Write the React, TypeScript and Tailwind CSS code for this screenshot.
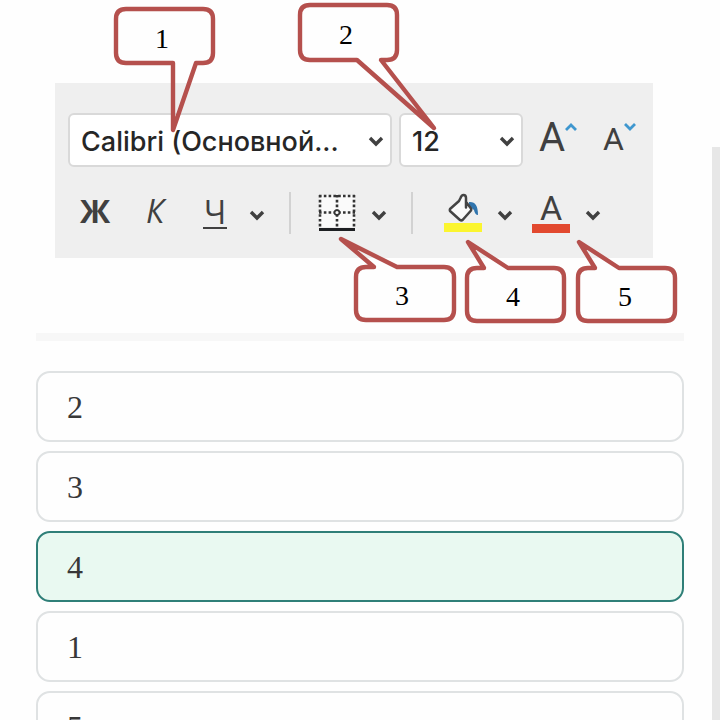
import React, { useState } from "react";

const OPTIONS = ["2", "3", "4", "1", "5"];

const CALLOUTS = [
  {
    label: "1",
    x: 162,
    y: 48,
    d: "M126 9H203Q213 9 213 19V53Q213 63 203 63H196L173 130V63H126Q116 63 116 53V19Q116 9 126 9Z",
  },
  {
    label: "2",
    x: 346,
    y: 44,
    d: "M310 5H387Q397 5 397 15V50Q397 60 387 60H381L434 128L357 60H310Q300 60 300 50V15Q300 5 310 5Z",
  },
  {
    label: "3",
    x: 402,
    y: 305,
    d: "M366 267H374L341 239L397 267H444Q454 267 454 277V310Q454 320 444 320H366Q356 320 356 310V277Q356 267 366 267Z",
  },
  {
    label: "4",
    x: 513,
    y: 306,
    d: "M477 268H484L468 242L508 268H554Q564 268 564 278V311Q564 321 554 321H477Q467 321 467 311V278Q467 268 477 268Z",
  },
  {
    label: "5",
    x: 625,
    y: 306,
    d: "M588 268H595L579 242L619 268H665Q675 268 675 278V311Q675 321 665 321H588Q578 321 578 311V278Q578 268 588 268Z",
  },
];

function Chevron({ className = "" }: { className?: string }) {
  return (
    <svg width="16" height="12" viewBox="0 0 16 12" fill="none" className={className}>
      <path d="M2 3L8 9L14 3" stroke="currentColor" strokeWidth="3.4" />
    </svg>
  );
}

function MenuButton({ label }: { label: string }) {
  return (
    <button aria-label={label} className="flex w-6 justify-center pt-1">
      <Chevron />
    </button>
  );
}

function Dropdown({ label, value, className }: { label: string; value: string; className: string }) {
  return (
    <div className={`relative ${className}`}>
      <select
        aria-label={label}
        className="h-[54px] w-full appearance-none rounded-md border-2 border-[#d9d9d9] bg-white pt-1 pl-[11px] text-[27px] font-medium text-[#262626]"
      >
        <option>{value}</option>
      </select>
      <Chevron className="pointer-events-none absolute top-[22px] right-2" />
    </div>
  );
}

function BordersIcon() {
  return (
    <svg width="38" height="38" viewBox="0 0 38 38" fill="none">
      <rect x="1" y="1" width="36" height="32" fill="#fafafa" />
      <g stroke="#333" strokeWidth="2.6" strokeDasharray="2.6 2.2">
        <path d="M1 2H37M1 18.500H37M2 1V33M19 1V33M36 1V33" />
      </g>
      <circle cx="19" cy="18.500" r="2.400" fill="#fafafa" stroke="#333" strokeWidth="1.6" />
      <path d="M1 35.500H37" stroke="#1d1f22" strokeWidth="3" />
    </svg>
  );
}

function FillIcon() {
  return (
    <svg width="38" height="40" viewBox="0 0 38 40" fill="none">
      <path d="M25 9Q34 8 34 22Q31 22 30 17L25 13Z" fill="#2f74ad" />
      <path
        d="M22 14.500V5Q22 2 19.500 2Q17.500 2 16.500 5L15 8L6 16Q5.500 17 6 18L16 27Q17.500 28 19 26.500L27 17.500Q27.500 16.500 27 15.500L22.500 9.500"
        fill="#fafafa"
        stroke="#444"
        strokeWidth="2.500"
        strokeLinecap="round"
        strokeLinejoin="round"
      />
      <rect y="30" width="38" height="9" fill="#fbf52f" />
    </svg>
  );
}

export default function App() {
  const [selected, setSelected] = useState("4");

  return (
    <div className="flex h-screen overflow-hidden bg-[#fefefe] font-['Inter',sans-serif]">
      <main className="min-w-0 flex-1 pr-7 pl-9">
        <figure className="relative pt-[83px] pr-[31px] pb-[75px] pl-[19px]">
          <div className="bg-[#efefef] pt-[30px] pb-[17px] text-[#404040]">
            <div className="flex h-[54px] pl-[13px]">
              <Dropdown label="Шрифт" value="Calibri (Основной..." className="mr-[7px] w-[324px]" />
              <Dropdown label="Размер шрифта" value="12" className="w-[124px]" />
              <button
                aria-label="Увеличить размер"
                className="ml-4 flex font-['Roboto',sans-serif] text-[40px] leading-[50px]"
              >
                A
                <svg width="12" height="8" viewBox="0 0 12 8" fill="none" className="mt-[10px]">
                  <path d="M1 7L6 2L11 7" stroke="#3f97cf" strokeWidth="2.8" />
                </svg>
              </button>
              <button
                aria-label="Уменьшить размер"
                className="ml-[26px] flex font-['Roboto',sans-serif] text-[32px] leading-[52px]"
              >
                A
                <svg width="12" height="8" viewBox="0 0 12 8" fill="none" className="mt-[10px]">
                  <path d="M1 1L6 6L11 1" stroke="#3f97cf" strokeWidth="2.8" />
                </svg>
              </button>
            </div>

            <div className="mt-5 flex h-[54px] items-center pb-[2px] pl-[10px] font-['Open_Sans',sans-serif] text-[32px] leading-8">
              <button className="w-[60px] pb-1 font-bold">Ж</button>
              <button className="w-[60px] pb-1 italic">К</button>
              <button className="flex w-[60px] justify-center">
                <span className="w-6 border-b-2 border-current leading-[30px]">Ч</span>
              </button>
              <MenuButton label="Подчеркивание" />
              <span className="mr-4 ml-5 h-[42px] w-[2px] bg-[#d2d2d2]" />
              <button aria-label="Границы" className="flex w-[60px] justify-center">
                <BordersIcon />
              </button>
              <MenuButton label="Вид границ" />
              <span className="mr-4 ml-5 h-[42px] w-[2px] bg-[#d2d2d2]" />
              <button aria-label="Заливка" className="ml-1 flex w-[60px] justify-center">
                <FillIcon />
              </button>
              <MenuButton label="Цвет заливки" />
              <button className="ml-1 flex w-[60px] justify-center pb-[2px] font-['Roboto',sans-serif] text-[34px]">
                <span className="w-[38px] border-b-[9px] border-[#e2492f] leading-8">A</span>
              </button>
              <MenuButton label="Цвет текста" />
            </div>
          </div>

          {/* numbered callouts drawn over the toolbar */}
          <svg width="720" height="333" viewBox="0 0 720 333" className="pointer-events-none absolute top-0 -left-9">
            {CALLOUTS.map((c) => (
              <g key={c.label}>
                <path d={c.d} fill="none" stroke="#b5504d" strokeWidth="4.400" strokeLinejoin="round" />
                <text x={c.x} y={c.y} textAnchor="middle" className="fill-black font-['Liberation_Serif',serif] text-[28px]">
                  {c.label}
                </text>
              </g>
            ))}
          </svg>
        </figure>

        <div className="h-2 bg-[#f7f7f7]" />

        <div className="mt-[30px] flex flex-col gap-[9px]">
          {OPTIONS.map((option) => (
            <label
              key={option}
              className="flex h-[71px] shrink-0 items-center rounded-[14px] border-2 border-[#dfe2e3] pl-[29px] font-['Liberation_Serif',serif] text-[32px] text-[#383838] has-checked:border-[#2f7f78] has-checked:bg-[#e9f9f1]"
            >
              <input
                type="radio"
                name="answer"
                value={option}
                checked={selected === option}
                onChange={() => setSelected(option)}
                className="sr-only"
              />
              {option}
            </label>
          ))}
        </div>
      </main>
      <div className="mt-[147px] w-2 bg-[#e7e7e7]" />
    </div>
  );
}
